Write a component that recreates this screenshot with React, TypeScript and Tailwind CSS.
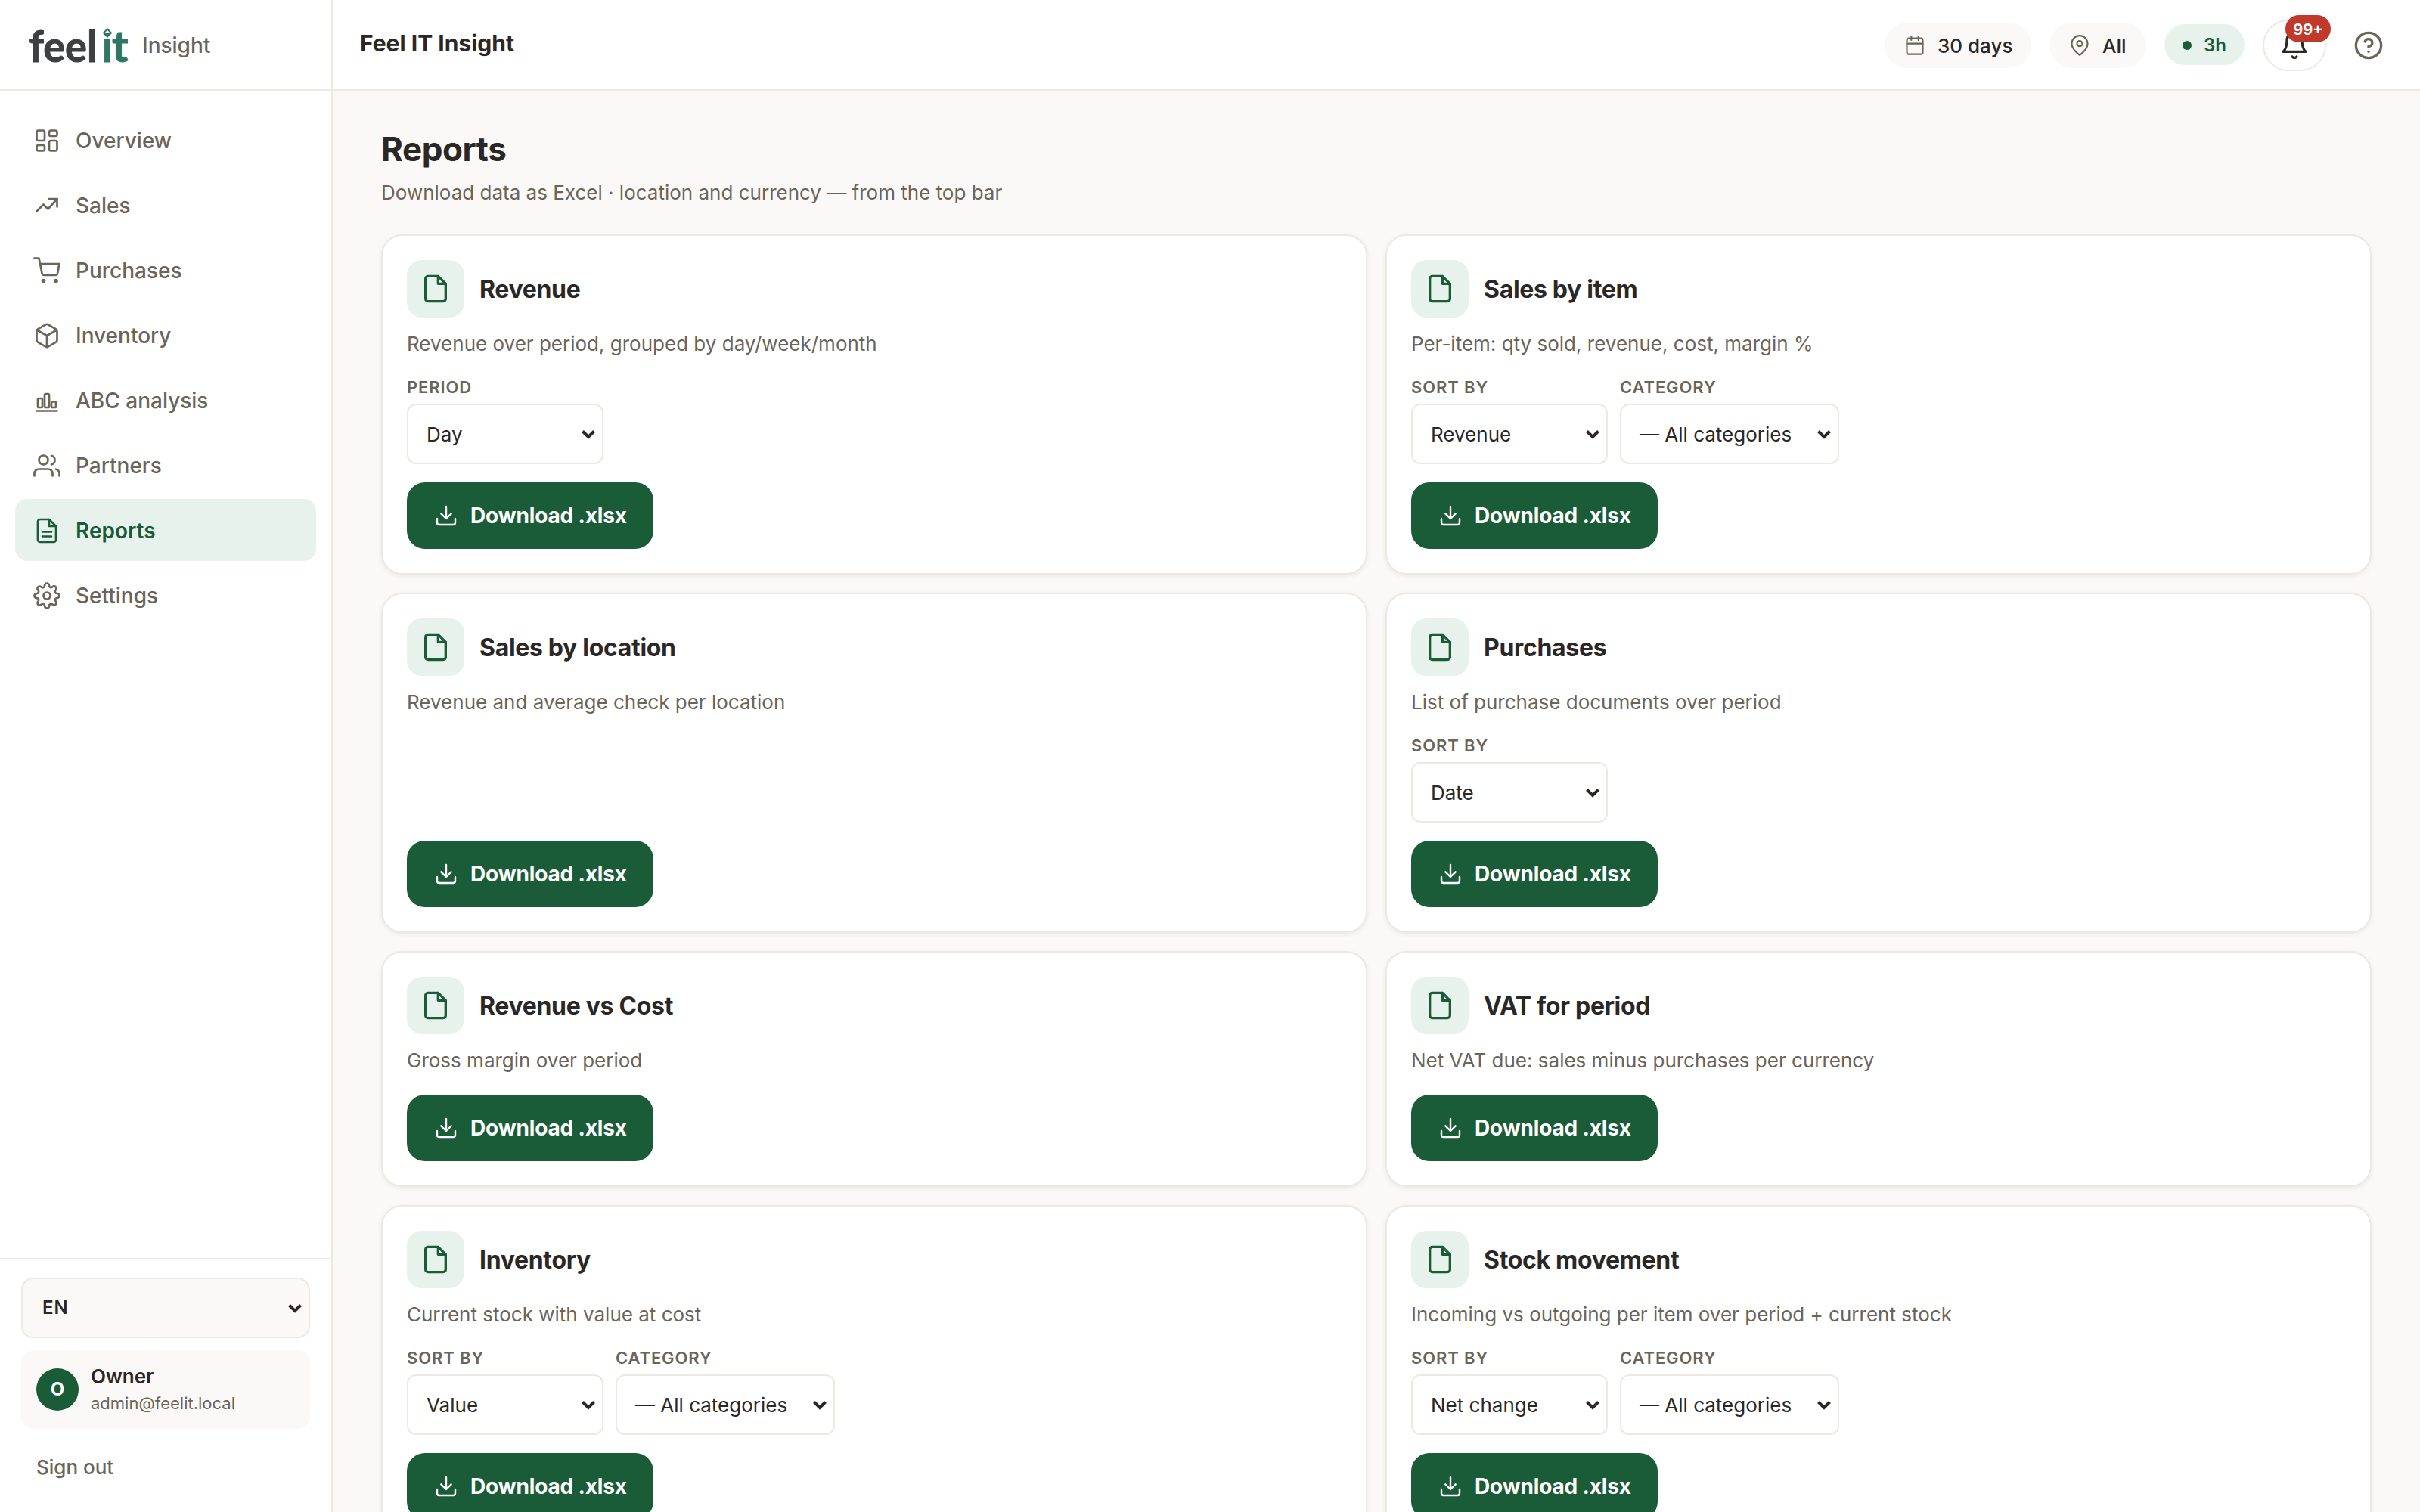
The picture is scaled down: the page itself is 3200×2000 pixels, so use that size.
import React from 'react';
import { Box, CircleHelp } from 'lucide-react';

interface SelectProps {
    label: string;
    value: string;
}

interface Report {
    title: string;
    text: string;
    selects?: SelectProps[];
}

const CATEGORY: SelectProps = { label: 'Category', value: '— All categories' };

const REPORTS: Report[] = [
    { title: 'Revenue', text: 'Revenue over period, grouped by day/week/month', selects: [{ label: 'Period', value: 'Day' }] },
    { title: 'Sales by item', text: 'Per-item: qty sold, revenue, cost, margin %', selects: [{ label: 'Sort by', value: 'Revenue' }, CATEGORY] },
    { title: 'Sales by location', text: 'Revenue and average check per location' },
    { title: 'Purchases', text: 'List of purchase documents over period', selects: [{ label: 'Sort by', value: 'Date' }] },
    { title: 'Revenue vs Cost', text: 'Gross margin over period' },
    { title: 'VAT for period', text: 'Net VAT due: sales minus purchases per currency' },
    { title: 'Inventory', text: 'Current stock with value at cost', selects: [{ label: 'Sort by', value: 'Value' }, CATEGORY] },
    { title: 'Stock movement', text: 'Incoming vs outgoing per item over period + current stock', selects: [{ label: 'Sort by', value: 'Net change' }, CATEGORY] },
];

interface IconProps {
    className?: string;
    strokeWidth?: number;
}

const Svg: React.FC<React.PropsWithChildren<IconProps>> = ({ className, strokeWidth = 1.8, children }) => (
    <svg
        viewBox="0 0 24 24"
        fill="none"
        stroke="currentColor"
        strokeWidth={strokeWidth}
        strokeLinecap="round"
        strokeLinejoin="round"
        className={className}
    >
        {children}
    </svg>
);

const DashboardIcon = (props: IconProps) => (
    <Svg {...props}>
        <rect x="3" y="3" width="7" height="9" rx="1.5" />
        <rect x="14" y="3" width="7" height="5" rx="1.5" />
        <rect x="14" y="12" width="7" height="9" rx="1.5" />
        <rect x="3" y="16" width="7" height="5" rx="1.5" />
    </Svg>
);

const TrendIcon = (props: IconProps) => (
    <Svg {...props}>
        <path d="M3 17l6-6 4 4 8-9" />
        <path d="M14 6h7v7" />
    </Svg>
);

const CartIcon = (props: IconProps) => (
    <Svg {...props}>
        <circle cx="9" cy="21" r="1" />
        <circle cx="20" cy="21" r="1" />
        <path d="M1 1h4l2.68 13.39a2 2 0 0 0 2 1.61h9.72a2 2 0 0 0 2-1.61L23 6H6" />
    </Svg>
);

const BarsIcon = (props: IconProps) => (
    <Svg {...props}>
        <path d="M3 21h18" />
        <rect x="4" y="10" width="4" height="8" rx="1" />
        <rect x="10" y="6" width="4" height="12" rx="1" />
        <rect x="16" y="13" width="4" height="5" rx="1" />
    </Svg>
);

const UsersIcon = (props: IconProps) => (
    <Svg {...props}>
        <path d="M17 21v-2a4 4 0 0 0-4-4H5a4 4 0 0 0-4 4v2" />
        <circle cx="9" cy="7" r="4" />
        <path d="M23 21v-2a4 4 0 0 0-3-3.87" />
        <path d="M16 3.13a4 4 0 0 1 0 7.75" />
    </Svg>
);

const FileIcon = (props: IconProps) => (
    <Svg {...props}>
        <path d="M14 2H6a2 2 0 0 0-2 2v16a2 2 0 0 0 2 2h12a2 2 0 0 0 2-2V8z" />
        <path d="M14 2v6h6" />
    </Svg>
);

const ReportIcon = (props: IconProps) => (
    <Svg {...props}>
        <path d="M14 2H6a2 2 0 0 0-2 2v16a2 2 0 0 0 2 2h12a2 2 0 0 0 2-2V8z" />
        <path d="M14 2v6h6M8 13h8M8 17h8" />
    </Svg>
);

const GearIcon = (props: IconProps) => (
    <Svg {...props}>
        <circle cx="12" cy="12" r="3" />
        <path d="M19.4 15a1.65 1.65 0 0 0 .33 1.82l.06.06a2 2 0 1 1-2.83 2.83l-.06-.06a1.65 1.65 0 0 0-1.82-.33 1.65 1.65 0 0 0-1 1.51V21a2 2 0 0 1-4 0v-.09A1.65 1.65 0 0 0 9 19.4a1.65 1.65 0 0 0-1.82.33l-.06.06a2 2 0 1 1-2.83-2.83l.06-.06a1.65 1.65 0 0 0 .33-1.82 1.65 1.65 0 0 0-1.51-1H3a2 2 0 0 1 0-4h.09A1.65 1.65 0 0 0 4.6 9a1.65 1.65 0 0 0-.33-1.82l-.06-.06a2 2 0 1 1 2.83-2.83l.06.06a1.65 1.65 0 0 0 1.82.33H9a1.65 1.65 0 0 0 1-1.51V3a2 2 0 0 1 4 0v.09a1.65 1.65 0 0 0 1 1.51 1.65 1.65 0 0 0 1.82-.33l.06-.06a2 2 0 1 1 2.83 2.83l-.06.06a1.65 1.65 0 0 0-.33 1.82V9a1.65 1.65 0 0 0 1.51 1H21a2 2 0 0 1 0 4h-.09a1.65 1.65 0 0 0-1.51 1z" />
    </Svg>
);

const CalendarIcon = (props: IconProps) => (
    <Svg {...props}>
        <rect x="3" y="4" width="18" height="18" rx="2" />
        <path d="M16 2v4M8 2v4M3 10h18" />
    </Svg>
);

const PinIcon = (props: IconProps) => (
    <Svg {...props}>
        <path d="M21 10c0 7-9 13-9 13s-9-6-9-13a9 9 0 0 1 18 0z" />
        <circle cx="12" cy="10" r="3" />
    </Svg>
);

const BellIcon = (props: IconProps) => (
    <Svg {...props}>
        <path d="M18 8A6 6 0 0 0 6 8c0 7-3 9-3 9h18s-3-2-3-9" />
        <path d="M13.73 21a2 2 0 0 1-3.46 0" />
    </Svg>
);

const DownloadIcon = (props: IconProps) => (
    <Svg {...props}>
        <path d="M12 3v12M7 10l5 5 5-5" />
        <path d="M3 15v4a2 2 0 0 0 2 2h14a2 2 0 0 0 2-2v-4" />
    </Svg>
);

const Chevron = () => (
    <svg viewBox="0 0 18 12" fill="none" stroke="currentColor" strokeWidth="4" className="w-[18px] h-3 mt-px shrink-0">
        <path d="M1.5 1.5L9 9l7.5-7.5" />
    </svg>
);

const NAV = [
    { label: 'Overview', icon: DashboardIcon },
    { label: 'Sales', icon: TrendIcon },
    { label: 'Purchases', icon: CartIcon },
    { label: 'Inventory', icon: Box },
    { label: 'ABC analysis', icon: BarsIcon },
    { label: 'Partners', icon: UsersIcon },
    { label: 'Reports', icon: ReportIcon, active: true },
    { label: 'Settings', icon: GearIcon },
];

const Logo = () => (
    <svg viewBox="0 0 136 118" className="w-[136px] h-[118px]">
        <g fontFamily="Lato, sans-serif" fontWeight="700" fontSize="58" strokeWidth="1">
            <text x="0.5" y="81.500" textLength="90" lengthAdjust="spacingAndGlyphs" fill="#3e3f41" stroke="#3e3f41">feel</text>
            <text x="96.500" y="81.500" fill="#2f7765" stroke="#2f7765">ı</text>
            <text x="110" y="81.500" fill="#2f7765" stroke="#2f7765">t</text>
        </g>
        {/* gem used as the dot of the i */}
        <path d="M104 38.500l5 5-5 5-5-5z" fill="none" stroke="#2f7765" strokeWidth="2" />
        <path d="M98.500 43.500h11l-5.500 5.500z" fill="#2f7765" />
    </svg>
);

const Sidebar = () => (
    <aside className="w-[440px] shrink-0 bg-white border-r-2 border-[#ece9e2] flex flex-col">
        <div className="h-[120px] shrink-0 border-b-2 border-[#ece9e2] flex items-center pl-[38px]">
            <Logo />
            <span className="ml-3.5 mt-0.5 text-[28px] font-medium text-[#6b6458]">Insight</span>
        </div>
        <nav className="flex-1 flex flex-col gap-1 px-5 pt-6">
            {NAV.map(({ label, icon: Icon, active }) => (
                <a
                    key={label}
                    className={
                        active
                            ? 'h-[82px] rounded-2xl px-6 pt-0.5 flex items-center gap-5 text-[28px] font-semibold bg-[#e8f2ed] text-[#1b5c38]'
                            : 'h-[82px] rounded-2xl px-6 pt-0.5 flex items-center gap-5 text-[28px] font-medium text-[#6b6458]'
                    }
                >
                    <Icon className="w-9 h-9 shrink-0" strokeWidth={1.8} />
                    {label}
                </a>
            ))}
        </nav>
        <div className="h-[336px] shrink-0 border-t-2 border-[#ece9e2] px-7 pt-6">
            <div className="h-20 rounded-2xl border-2 border-[#ece9e2] bg-[#faf9f7] flex items-center justify-between pl-[26px] pr-[9px] text-[24px] font-semibold tracking-[0.04em] text-[#2a2725]">
                EN
                <Chevron />
            </div>
            <div className="mt-4 h-[104px] rounded-2xl bg-[#faf9f7] px-5 flex items-center gap-4">
                <div className="w-14 h-14 rounded-full bg-[#1b5c38] text-white text-[24px] font-bold flex items-center justify-center">
                    O
                </div>
                <div className="mt-0.5">
                    <p className="text-[26px] leading-[34px] font-semibold text-[#2a2725]">Owner</p>
                    <p className="text-[22px] leading-[36px] text-[#6b6458]">admin@feelit.local</p>
                </div>
            </div>
            <p className="mt-[31px] pl-5 text-[26px] leading-[39px] font-medium text-[#6b6458]">Sign out</p>
        </div>
    </aside>
);

const Topbar = () => (
    <header className="h-[120px] shrink-0 bg-white border-b-2 border-[#ece9e2] flex items-center justify-between px-9">
        <h2 className="pb-1 text-[30px] font-bold text-[#2a2725]">Feel IT Insight</h2>
        <div className="pt-0.5 flex items-center gap-6">
            <div className="w-[194px] h-[60px] rounded-full bg-[#faf9f7] pl-[26px] flex items-center gap-4 text-[26px] font-medium text-[#2a2725]">
                <CalendarIcon className="w-7 h-7 text-[#6b6458]" />
                30 days
            </div>
            <div className="w-[128px] h-[60px] rounded-full bg-[#faf9f7] pl-[26px] flex items-center gap-4 text-[26px] font-medium text-[#2a2725]">
                <PinIcon className="w-7 h-7 text-[#6b6458]" />
                All
            </div>
            <div className="w-[106px] h-[54px] mb-0.5 rounded-full bg-[#e8f2ed] pl-6 pt-0.5 flex items-center gap-4 text-[24px] font-semibold text-[#1b5c38]">
                <span className="w-3 h-3 rounded-full bg-[#1b5c38]" />
                3h
            </div>
            <div className="relative w-[84px] h-[68px] rounded-full border-2 border-[#ece9e2] flex items-center justify-center text-[#2a2725]">
                <BellIcon className="w-10 h-10" strokeWidth={2} />
                <span className="absolute -top-2 -right-2 w-[60px] h-9 rounded-full bg-[#c0392b] text-white text-[20px] font-bold flex items-center justify-center pt-px">
                    99+
                </span>
            </div>
            <div className="w-16 flex justify-center text-[#6b6458]">
                <CircleHelp className="w-10 h-10" strokeWidth={2} />
            </div>
        </div>
    </header>
);

const Select: React.FC<SelectProps> = ({ label, value }) => (
    <div className="flex flex-col gap-2.5">
        <span className="text-[22px] leading-[24px] font-semibold uppercase tracking-[0.04em] text-[#6b6458]">{label}</span>
        <div className="h-20 min-w-[260px] rounded-xl border-2 border-[#ece9e2] bg-white flex items-center justify-between gap-[34px] pl-6 pr-[9px] text-[26px] text-[#2a2725]">
            {value}
            <Chevron />
        </div>
    </div>
);

const ReportCard: React.FC<Report> = ({ title, text, selects }) => (
    <div className="rounded-[28px] border-2 border-[#ece9e2] bg-white p-8 flex flex-col shadow-[0_2px_6px_rgba(42,39,37,0.08)]">
        <div className="flex items-center gap-5">
            <div className="w-[76px] h-[76px] rounded-[20px] bg-[#e8f2ed] text-[#1b5c38] flex items-center justify-center">
                <FileIcon className="w-10 h-10" strokeWidth={2} />
            </div>
            <h3 className="mt-0.5 text-[32px] leading-[48px] font-bold tracking-[-0.01em] text-[#2a2725]">{title}</h3>
        </div>
        <p className="mt-3.5 text-[26px] leading-[42px] text-[#6b6458]">{text}</p>
        {selects && (
            <div className="mt-6 flex gap-4">
                {selects.map((s) => (
                    <Select key={s.label} {...s} />
                ))}
            </div>
        )}
        <div className="mt-auto pt-6">
            <button className="w-[326px] h-[88px] rounded-[24px] bg-[#1b5c38] text-white text-[28px] font-bold tracking-[-0.005em] flex items-center pl-9 gap-4">
                <DownloadIcon className="w-8 h-8" />
                Download .xlsx
            </button>
        </div>
    </div>
);

export default function App() {
    return (
        <div className="w-[3200px] h-[2000px] overflow-hidden flex bg-[#faf9f7] font-['Inter',sans-serif]">
            <Sidebar />
            <div className="flex-1 flex flex-col">
                <Topbar />
                <main className="flex-1 min-h-0 px-16 pt-11">
                    <h1 className="text-[44px] leading-[66px] font-bold tracking-[-0.01em] text-[#2a2725]">Reports</h1>
                    <p className="mt-[5px] text-[26px] leading-[39px] text-[#6b6458]">
                        Download data as Excel · location and currency — from the top bar
                    </p>
                    <div className="mt-9 grid grid-cols-2 gap-6">
                        {REPORTS.map((r) => (
                            <ReportCard key={r.title} {...r} />
                        ))}
                    </div>
                </main>
            </div>
        </div>
    );
}
